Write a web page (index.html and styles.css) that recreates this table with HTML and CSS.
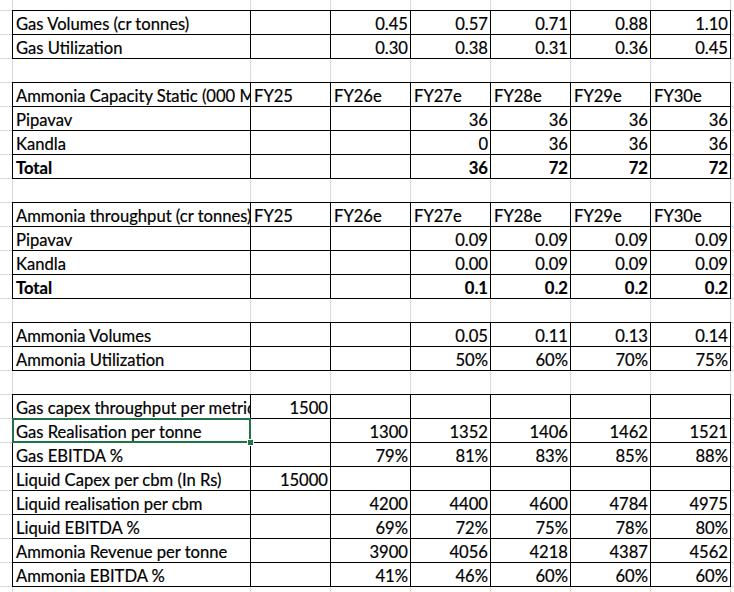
FILE: index.html
```html
<!DOCTYPE html>
<html>
<head>
<meta charset="utf-8">
<link rel="stylesheet" href="styles.css">
</head>
<body>
<div class="wrap">
<table class="sheet">
<colgroup><col class="c0"><col class="ca"><col class="cn"><col class="cn"><col class="cn"><col class="cn"><col class="cn"><col class="cn"><col class="ch"></colgroup>
<tr class="edge"><td></td><td></td><td></td><td></td><td></td><td></td><td></td><td></td><td></td></tr>
<tr><td></td><td class="b">Gas Volumes (cr tonnes)</td><td class="b"></td><td class="b n">0.45</td><td class="b n">0.57</td><td class="b n">0.71</td><td class="b n">0.88</td><td class="b n">1.10</td><td></td></tr>
<tr><td></td><td class="b">Gas Utilization</td><td class="b"></td><td class="b n">0.30</td><td class="b n">0.38</td><td class="b n">0.31</td><td class="b n">0.36</td><td class="b n">0.45</td><td></td></tr>
<tr><td></td><td></td><td></td><td></td><td></td><td></td><td></td><td></td><td></td></tr>
<tr><td></td><td class="b">Ammonia Capacity Static (000 MT)</td><td class="b">FY25</td><td class="b">FY26e</td><td class="b">FY27e</td><td class="b">FY28e</td><td class="b">FY29e</td><td class="b">FY30e</td><td></td></tr>
<tr><td></td><td class="b">Pipavav</td><td class="b"></td><td class="b"></td><td class="b n">36</td><td class="b n">36</td><td class="b n">36</td><td class="b n">36</td><td></td></tr>
<tr><td></td><td class="b">Kandla</td><td class="b"></td><td class="b"></td><td class="b n">0</td><td class="b n">36</td><td class="b n">36</td><td class="b n">36</td><td></td></tr>
<tr class="tot"><td></td><td class="b">Total</td><td class="b"></td><td class="b"></td><td class="b n">36</td><td class="b n">72</td><td class="b n">72</td><td class="b n">72</td><td></td></tr>
<tr><td></td><td></td><td></td><td></td><td></td><td></td><td></td><td></td><td></td></tr>
<tr><td></td><td class="b">Ammonia throughput (cr tonnes)</td><td class="b">FY25</td><td class="b">FY26e</td><td class="b">FY27e</td><td class="b">FY28e</td><td class="b">FY29e</td><td class="b">FY30e</td><td></td></tr>
<tr><td></td><td class="b">Pipavav</td><td class="b"></td><td class="b"></td><td class="b n">0.09</td><td class="b n">0.09</td><td class="b n">0.09</td><td class="b n">0.09</td><td></td></tr>
<tr><td></td><td class="b">Kandla</td><td class="b"></td><td class="b"></td><td class="b n">0.00</td><td class="b n">0.09</td><td class="b n">0.09</td><td class="b n">0.09</td><td></td></tr>
<tr class="tot"><td></td><td class="b">Total</td><td class="b"></td><td class="b"></td><td class="b n">0.1</td><td class="b n">0.2</td><td class="b n">0.2</td><td class="b n">0.2</td><td></td></tr>
<tr><td></td><td></td><td></td><td></td><td></td><td></td><td></td><td></td><td></td></tr>
<tr><td></td><td class="b">Ammonia Volumes</td><td class="b"></td><td class="b"></td><td class="b n">0.05</td><td class="b n">0.11</td><td class="b n">0.13</td><td class="b n">0.14</td><td></td></tr>
<tr><td></td><td class="b">Ammonia Utilization</td><td class="b"></td><td class="b"></td><td class="b n">50%</td><td class="b n">60%</td><td class="b n">70%</td><td class="b n">75%</td><td></td></tr>
<tr><td></td><td></td><td></td><td></td><td></td><td></td><td></td><td></td><td></td></tr>
<tr><td></td><td class="b">Gas capex throughput per metric tonne</td><td class="b n">1500</td><td class="b"></td><td class="b"></td><td class="b"></td><td class="b"></td><td class="b"></td><td></td></tr>
<tr><td></td><td class="b sel">Gas Realisation per tonne</td><td class="b"></td><td class="b n">1300</td><td class="b n">1352</td><td class="b n">1406</td><td class="b n">1462</td><td class="b n">1521</td><td></td></tr>
<tr><td></td><td class="b">Gas EBITDA %</td><td class="b"></td><td class="b n">79%</td><td class="b n">81%</td><td class="b n">83%</td><td class="b n">85%</td><td class="b n">88%</td><td></td></tr>
<tr><td></td><td class="b">Liquid Capex per cbm (In Rs)</td><td class="b n">15000</td><td class="b"></td><td class="b"></td><td class="b"></td><td class="b"></td><td class="b"></td><td></td></tr>
<tr><td></td><td class="b">Liquid realisation per cbm</td><td class="b"></td><td class="b n">4200</td><td class="b n">4400</td><td class="b n">4600</td><td class="b n">4784</td><td class="b n">4975</td><td></td></tr>
<tr><td></td><td class="b">Liquid EBITDA %</td><td class="b"></td><td class="b n">69%</td><td class="b n">72%</td><td class="b n">75%</td><td class="b n">78%</td><td class="b n">80%</td><td></td></tr>
<tr><td></td><td class="b">Ammonia Revenue per tonne</td><td class="b"></td><td class="b n">3900</td><td class="b n">4056</td><td class="b n">4218</td><td class="b n">4387</td><td class="b n">4562</td><td></td></tr>
<tr><td></td><td class="b">Ammonia EBITDA %</td><td class="b"></td><td class="b n">41%</td><td class="b n">46%</td><td class="b n">60%</td><td class="b n">60%</td><td class="b n">60%</td><td></td></tr>
<tr class="edge"><td></td><td></td><td></td><td></td><td></td><td></td><td></td><td></td><td></td></tr>
</table>
<div class="handle"></div>
</div>
</body>
</html>
```

FILE: styles.css
```css
html, body {
  margin: 0;
  padding: 0;
  background: #ffffff;
  overflow: hidden;
}
.wrap {
  position: relative;
  width: 734px;
  height: 592px;
  overflow: hidden;
}
.sheet {
  border-collapse: separate;
  border-spacing: 1px;
  background: #dadada;
  table-layout: fixed;
  width: 752px;
  margin: -1px 0 0 -1px;
  font-family: Lato, "Liberation Sans", sans-serif;
  font-size: 16.6px;
  color: #000;
}
.c0 { width: 12px; }
.ca { width: 237px; }
.cn { width: 79px; }
.ch { width: 20px; }
.sheet tr { height: 23px; }
.sheet tr.edge { height: 10px; }
.sheet td {
  background: #ffffff;
  padding: 0 3px 0 3px;
  height: 23px;
  line-height: 19px;
  vertical-align: bottom;
  white-space: nowrap;
  overflow: hidden;
  text-overflow: clip;
  box-sizing: border-box;
  -webkit-text-stroke: 0.2px #000;
}
.sheet tr.edge td { height: 10px; }
.sheet td.b {
  outline: 1px solid #000;
}
.sheet td.n { text-align: right; padding-right: 2px; }
.sheet tr.tot td { font-weight: bold; }
.sheet td.sel {
  outline: 2px solid #217346;
  outline-offset: -1px;
  position: relative;
  z-index: 1;
}
.handle {
  position: absolute;
  left: 247px;
  top: 439px;
  width: 5px;
  height: 5px;
  background: #217346;
  border: 1px solid #ffffff;
  z-index: 2;
}
```
